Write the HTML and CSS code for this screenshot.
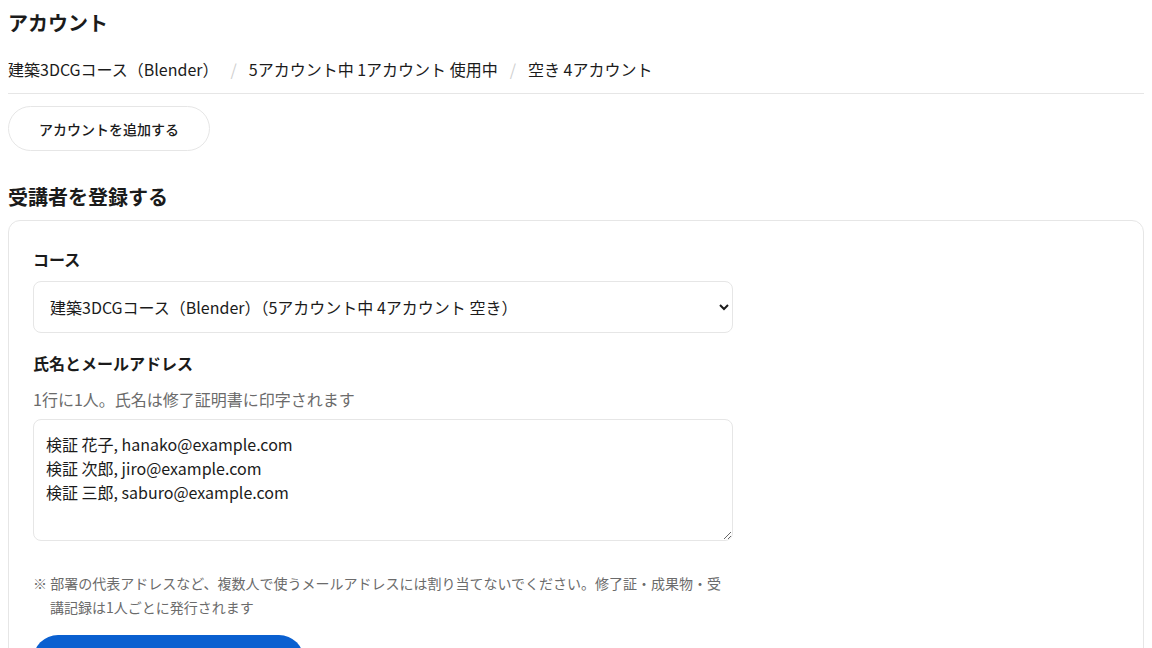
FILE: index.html
```html
<!DOCTYPE html>
<html lang="ja">
<head>
<meta charset="utf-8">
<title>アカウント</title>
<link rel="stylesheet" href="styles.css">
</head>
<body>
<h1 class="page-title">アカウント</h1>
<div class="summary">
  <span>建築3DCGコース（Blender）</span>
  <span class="sep">/</span>
  <span>5アカウント中 1アカウント 使用中</span>
  <span class="sep">/</span>
  <span>空き 4アカウント</span>
</div>
<button class="btn-outline" type="button">アカウントを追加する</button>
<h2 class="section-title">受講者を登録する</h2>
<form class="card">
  <div class="form-col">
    <label class="field-label" for="course">コース</label>
    <select id="course" class="select">
      <option>建築3DCGコース（Blender）（5アカウント中 4アカウント 空き）</option>
    </select>
    <label class="field-label field-label--gap" for="people">氏名とメールアドレス</label>
    <p class="helper">1行に1人。氏名は修了証明書に印字されます</p>
    <textarea id="people" class="textarea">検証 花子, hanako@example.com
検証 次郎, jiro@example.com
検証 三郎, saburo@example.com</textarea>
    <p class="note">※ 部署の代表アドレスなど、複数人で使うメールアドレスには割り当てないでください。修了証・成果物・受講記録は1人ごとに発行されます</p>
    <button class="btn-primary" type="button">登録する</button>
  </div>
</form>
</body>
</html>
```
FILE: styles.css
```css
* { box-sizing: border-box; }
html, body { background: #ffffff; }
body {
  margin: 8px;
  font-family: "Noto Sans CJK JP", "Noto Sans", sans-serif;
  color: #1b1b1b;
  font-size: 16px;
  line-height: 24px;
}
.page-title {
  margin: 0;
  font-size: 20px;
  line-height: 30px;
  font-weight: 700;
}
.summary {
  margin-top: 19px;
  padding-bottom: 12px;
  border-bottom: 1px solid #e6e6e6;
  display: flex;
  align-items: center;
  gap: 12px;
  font-size: 16px;
  line-height: 24px;
  color: #1b1b1b;
}
.sep { color: #d0d0d0; }
.btn-outline {
  margin-top: 12px;
  height: 45px;
  padding: 0 30px;
  border: 1px solid #e6e6e6;
  border-radius: 23px;
  background: #ffffff;
  font-family: inherit;
  font-size: 14px;
  font-weight: 500;
  color: #1b1b1b;
  display: block;
}
.section-title {
  margin: 31px 0 8px;
  font-size: 20px;
  line-height: 30px;
  font-weight: 700;
}
.card {
  border: 1px solid #e6e6e6;
  border-radius: 12px;
  padding: 26px 24px 40px;
  min-height: 460px;
}
.form-col {
  width: 700px;
  display: flex;
  flex-direction: column;
}
.field-label {
  font-size: 16px;
  font-weight: 700;
  line-height: 24px;
}
.field-label--gap { margin-top: 18px; }
.select {
  margin-top: 10px;
  height: 52px;
  width: 100%;
  padding: 0 12px;
  border: 1px solid #e6e6e6;
  border-radius: 8px;
  background: #ffffff;
  font-family: inherit;
  font-size: 16px;
  color: #1b1b1b;
}
.helper {
  margin: 12px 0 0;
  font-size: 16px;
  line-height: 24px;
  color: #6b6b6b;
}
.textarea {
  margin-top: 8px;
  width: 100%;
  height: 122px;
  padding: 12px 12px;
  border: 1px solid #e6e6e6;
  border-radius: 8px;
  font-family: inherit;
  font-size: 16px;
  line-height: 24px;
  color: #1b1b1b;
  resize: vertical;
}
.note {
  margin: 30px 0 0;
  padding-left: 17px;
  text-indent: -17px;
  font-size: 14px;
  line-height: 24px;
  color: #6b6b6b;
}
.btn-primary {
  margin-top: 16px;
  width: 271px;
  height: 50px;
  border: none;
  border-radius: 25px;
  background: #0a60d0;
  color: #ffffff;
  font-family: inherit;
  font-size: 15px;
  font-weight: 700;
}
```
